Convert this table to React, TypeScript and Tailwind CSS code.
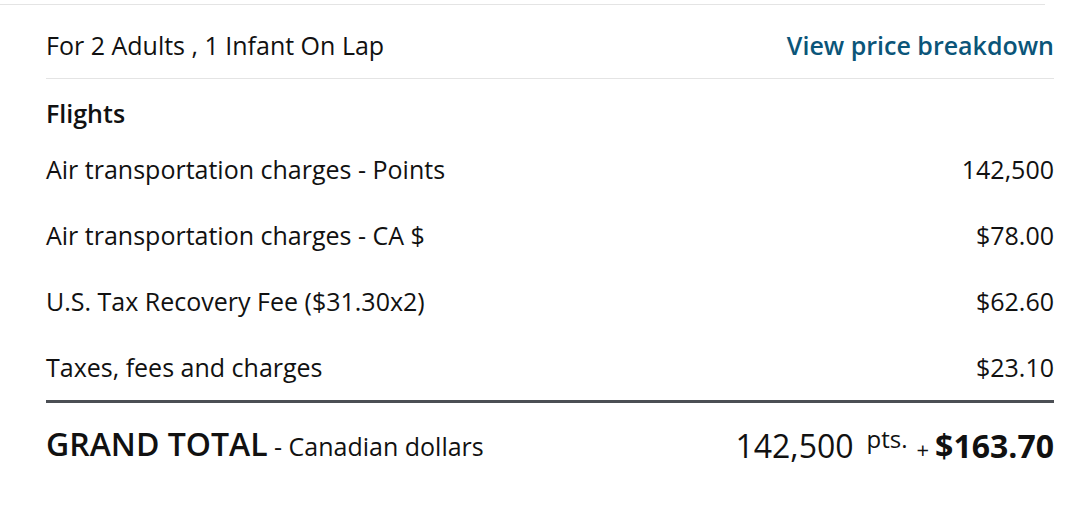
import React from 'react'

type Line = { label: string; amount: string }

const lines: Line[] = [
  { label: 'Air transportation charges - Points', amount: '142,500' },
  { label: 'Air transportation charges - CA $', amount: '$78.00' },
  { label: 'U.S. Tax Recovery Fee ($31.30x2)', amount: '$62.60' },
  { label: 'Taxes, fees and charges', amount: '$23.10' },
]

export default function App() {
  return (
    <div
      className="w-[1080px] h-[506px] bg-white text-[#111] overflow-hidden"
      style={{ fontFamily: '"Open Sans", "Liberation Sans", sans-serif' }}
    >
      <div className="h-[5px] w-[1045px] border-b border-[#e4e4e4]" />

      <div className="pl-[46px] pr-[26px]">
        {/* passengers + link */}
        <div className="flex items-center justify-between pt-[25px] pb-[18px] border-b border-[#e4e4e4] text-[25px] leading-[30px]">
          <span>For 2 Adults , 1 Infant On Lap</span>
          <a href="#" className="font-semibold text-[#0b5579]">
            View price breakdown
          </a>
        </div>

        <div className="mt-[19px] text-[25px] leading-[30px] font-semibold">Flights</div>

        <div className="mt-[8px]">
          {lines.map((l) => (
            <div key={l.label} className="flex items-center justify-between h-[66px] text-[25px] leading-[30px]">
              <span>{l.label}</span>
              <span>{l.amount}</span>
            </div>
          ))}
        </div>

        <div className="border-t-[3px] border-[#4b4f54] flex items-center justify-between pt-[23px]">
          <div className="leading-[36px]">
            <span className="text-[32px] font-semibold">GRAND TOTAL</span>
            <span className="text-[25px]"> - Canadian dollars</span>
          </div>
          <div className="flex items-baseline leading-[36px]">
            <span className="text-[32px]">142,500</span>
            <span className="text-[24px] ml-[13px] relative -top-[10px]">pts.</span>
            <span className="text-[22px] ml-[9px] mr-[6px]">+</span>
            <span className="text-[32px] font-bold">$163.70</span>
          </div>
        </div>
      </div>
    </div>
  )
}
